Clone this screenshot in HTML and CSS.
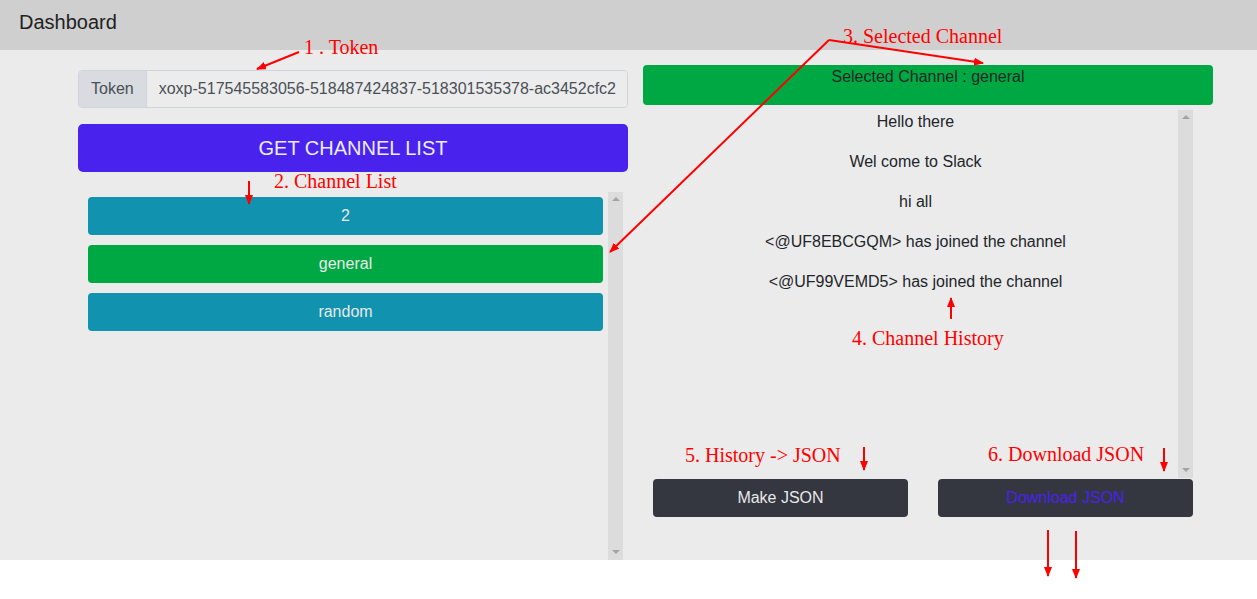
FILE: index.html
```html
<!DOCTYPE html>
<html>
<head>
<meta charset="utf-8">
<title>Dashboard</title>
<link rel="stylesheet" href="styles.css">
</head>
<body>
<header class="topbar">Dashboard</header>
<main class="main">
  <section class="left">
    <div class="input-group">
      <span class="prepend">Token</span>
      <span class="token-input">xoxp-517545583056-518487424837-518301535378-ac3452cfc2</span>
    </div>
    <button class="btn-get">GET CHANNEL LIST</button>
    <div class="scroll-box channel-box">
      <div class="channel-list">
        <button class="ch ch-info">2</button>
        <button class="ch ch-active">general</button>
        <button class="ch ch-info">random</button>
      </div>
      <div class="scrollbar"><span class="tri-up"></span><span class="tri-down"></span></div>
    </div>
  </section>
  <section class="right">
    <div class="selected">Selected Channel : general</div>
    <div class="scroll-box history-box">
      <div class="history">
        <p>Hello there</p>
        <p>Wel come to Slack</p>
        <p>hi all</p>
        <p>&lt;@UF8EBCGQM&gt; has joined the channel</p>
        <p>&lt;@UF99VEMD5&gt; has joined the channel</p>
      </div>
      <div class="scrollbar"><span class="tri-up"></span><span class="tri-down"></span></div>
    </div>
    <div class="actions">
      <button class="btn-dark">Make JSON</button>
      <button class="btn-dark btn-link">Download JSON</button>
    </div>
  </section>
</main>
<div class="notes">
  <svg class="arrows" width="1257" height="599" viewBox="0 0 1257 599">
    <defs>
      <marker id="ah" markerWidth="10" markerHeight="8" refX="9" refY="4" orient="auto" markerUnits="userSpaceOnUse">
        <path d="M0,0 L10,4 L0,8 Z" fill="#ff0000"/>
      </marker>
    </defs>
    <g stroke="#ff0000" stroke-width="2" fill="none" marker-end="url(#ah)">
      <line x1="299" y1="52" x2="257" y2="69"/>
      <line x1="249" y1="181" x2="249" y2="204"/>
      <line x1="829" y1="40" x2="610" y2="252"/>
      <line x1="829" y1="40" x2="983" y2="63"/>
      <line x1="951" y1="319" x2="951" y2="298"/>
      <line x1="864" y1="447" x2="864" y2="470"/>
      <line x1="1164" y1="448" x2="1164" y2="471"/>
      <line x1="1048" y1="530" x2="1048" y2="576"/>
      <line x1="1076" y1="531" x2="1076" y2="578"/>
    </g>
  </svg>
  <span class="note n1">1 . Token</span>
  <span class="note n2">2. Channel List</span>
  <span class="note n3">3. Selected Channel</span>
  <span class="note n4">4. Channel History</span>
  <span class="note n5">5. History -&gt; JSON</span>
  <span class="note n6">6. Download JSON</span>
</div>
</body>
</html>
```
FILE: styles.css
```css
html, body {
  margin: 0;
  padding: 0;
  background: #ffffff;
  font-family: "Liberation Sans", Arial, sans-serif;
  color: #212529;
}
body {
  position: relative;
  width: 1257px;
  height: 599px;
  overflow: hidden;
}
.topbar {
  height: 50px;
  box-sizing: border-box;
  background: #cfcfcf;
  padding: 7px 19px 0;
  font-size: 20px;
  line-height: 30px;
  color: #222;
}
.main {
  display: flex;
  height: 510px;
  background: #ebebeb;
}
.left {
  width: 550px;
  margin-left: 78px;
  padding-top: 20px;
  display: flex;
  flex-direction: column;
}
.input-group {
  display: flex;
  height: 38px;
  box-sizing: border-box;
  border: 1px solid #ced4da;
  border-radius: 4px;
  overflow: hidden;
  font-size: 16px;
}
.prepend {
  display: flex;
  align-items: center;
  padding: 0 12px;
  background: #d8dbdf;
  border-right: 1px solid #ced4da;
  color: #495057;
}
.token-input {
  display: flex;
  align-items: center;
  padding: 0 12px;
  color: #495057;
  background: #ececec;
  flex: 1;
  white-space: nowrap;
}
.btn-get {
  margin-top: 16px;
  height: 48px;
  border: none;
  border-radius: 5px;
  background: #4a22ee;
  color: #ececf8;
  font-family: "Liberation Sans", Arial, sans-serif;
  font-size: 20px;
  padding: 0;
}
.scroll-box {
  display: flex;
  height: 368px;
}
.scrollbar {
  flex: none;
  width: 15px;
  background: #dcdcdc;
  display: flex;
  flex-direction: column;
  justify-content: space-between;
  align-items: center;
  padding: 5px 0 6px;
  box-sizing: border-box;
}
.tri-up {
  width: 0;
  height: 0;
  border-left: 4px solid transparent;
  border-right: 4px solid transparent;
  border-bottom: 4px solid #a3a3a3;
}
.tri-down {
  width: 0;
  height: 0;
  border-left: 4px solid transparent;
  border-right: 4px solid transparent;
  border-top: 4px solid #a3a3a3;
}
.channel-box {
  margin: 20px 0 0 10px;
  width: 535px;
}
.channel-list {
  flex: 1;
  padding: 5px 5px 0 0;
  display: flex;
  flex-direction: column;
  gap: 10px;
  overflow: hidden;
}
.ch {
  flex: none;
  height: 38px;
  border: none;
  border-radius: 4px;
  color: #e8e8e8;
  font-family: "Liberation Sans", Arial, sans-serif;
  font-size: 16px;
  padding: 0;
}
.ch-info { background: #1192ae; }
.ch-active { background: #00a844; }
.right {
  width: 570px;
  margin-left: 15px;
  padding-top: 15px;
  display: flex;
  flex-direction: column;
}
.selected {
  height: 40px;
  background: #00a844;
  border-radius: 4px;
  text-align: center;
  font-size: 16px;
  line-height: 24px;
  color: #1f2a22;
}
.history-box {
  margin: 5px 20px 0 10px;
}
.history {
  flex: 1;
  overflow: hidden;
  text-align: center;
  font-size: 16px;
  line-height: 24px;
}
.history p {
  margin: 0 0 16px;
}
.actions {
  margin: 1px 20px 0 10px;
  display: flex;
  gap: 30px;
}
.btn-dark {
  width: 255px;
  height: 38px;
  border: none;
  border-radius: 4px;
  background: #343640;
  color: #e8e8e8;
  font-family: "Liberation Sans", Arial, sans-serif;
  font-size: 16px;
  padding: 0;
}
.btn-link { color: #4a22ee; }
.notes {
  position: absolute;
  left: 0;
  top: 0;
  width: 1257px;
  height: 599px;
  pointer-events: none;
}
.arrows {
  position: absolute;
  left: 0;
  top: 0;
}
.note {
  position: absolute;
  font-family: "Liberation Serif", "Times New Roman", serif;
  font-size: 20px;
  line-height: 23px;
  color: #ff0000;
  white-space: nowrap;
}
.n1 { left: 304px; top: 36px; }
.n2 { left: 274px; top: 170px; }
.n3 { left: 843px; top: 25px; }
.n4 { left: 852px; top: 327px; }
.n5 { left: 685px; top: 444px; }
.n6 { left: 988px; top: 443px; }
```
